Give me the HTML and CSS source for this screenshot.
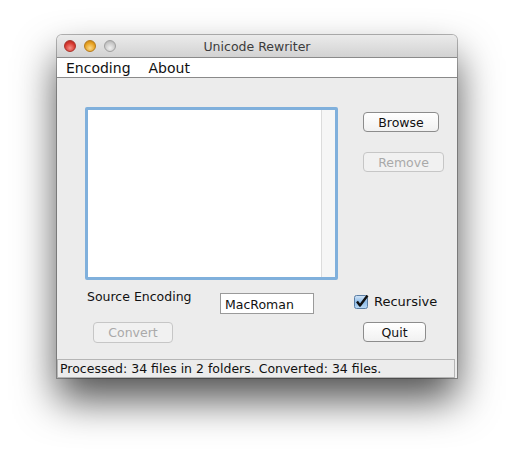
FILE: index.html
```html
<!DOCTYPE html>
<html lang="en">
<head>
  <meta charset="UTF-8">
  <title>Unicode Rewriter</title>
  <link rel="stylesheet" href="styles.css">
</head>
<body>
  <div class="window">
    <!-- title bar -->
    <div class="titlebar">
      <div class="lights">
        <span class="light red"></span>
        <span class="light yellow"></span>
        <span class="light grey"></span>
      </div>
      <div class="title">Unicode Rewriter</div>
    </div>

    <!-- menu -->
    <div class="menubar">
      <span class="menu-item">Encoding</span>
      <span class="menu-item">About</span>
    </div>

    <div class="content">
      <div class="top-row">
        <div class="file-list">
          <div class="list-area"></div>
          <div class="list-scroll"></div>
        </div>
        <div class="side-buttons">
          <button class="btn browse">Browse</button>
          <button class="btn remove" disabled>Remove</button>
        </div>
      </div>

      <div class="options-row">
        <label class="source-label">Source Encoding</label>
        <input class="encoding" type="text" value="MacRoman">
        <div class="check">
          <svg width="15" height="14" viewBox="0 0 15 14">
            <defs>
              <linearGradient id="cb" x1="0" y1="0" x2="0" y2="1">
                <stop offset="0" stop-color="#d4e6f7"/>
                <stop offset="0.5" stop-color="#8fbce8"/>
                <stop offset="1" stop-color="#b9d9f5"/>
              </linearGradient>
            </defs>
            <rect x="0.5" y="0.5" width="13" height="13" rx="2" fill="url(#cb)" stroke="#5a7da3"/>
            <path d="M3 6.5 L6 10.5 L13.5 0.5" fill="none" stroke="#111" stroke-width="2.4" stroke-linejoin="round"/>
          </svg>
          <span>Recursive</span>
        </div>
      </div>

      <div class="actions-row">
        <button class="btn convert" disabled>Convert</button>
        <button class="btn quit">Quit</button>
      </div>
    </div>

    <div class="statusbar">Processed: 34 files in 2 folders. Converted: 34 files.</div>
  </div>
</body>
</html>
```

FILE: styles.css
```css
* {
  margin: 0;
  padding: 0;
  box-sizing: border-box;
}
body {
  background-color: #ffffff;
  font-family: "DejaVu Sans", sans-serif;
  padding: 35px 0 0 57px;
  width: 514px;
  height: 458px;
  overflow: hidden;
}
.window {
  width: 400px;
  height: 343px;
  background-color: #ececec;
  border-radius: 5px 5px 0 0;
  box-shadow: 0 22px 40px rgba(0, 0, 0, 0.68), 0 0 0 1px rgba(0, 0, 0, 0.28);
  display: flex;
  flex-direction: column;
}
.titlebar {
  height: 22px;
  border-radius: 5px 5px 0 0;
  background: linear-gradient(#ebebeb, #d2d2d2);
  display: flex;
  align-items: center;
  position: relative;
}
.lights {
  display: flex;
  gap: 8px;
  padding-left: 7px;
}
.light {
  width: 12px;
  height: 12px;
  border-radius: 50%;
}
.red {
  background: radial-gradient(circle at 50% 70%, #f58f86, #d6362e 60%, #a3241d);
  border: 1px solid #a8322a;
}
.yellow {
  background: radial-gradient(circle at 50% 70%, #fbd98a, #e6a01f 60%, #b57712);
  border: 1px solid #b57a1c;
}
.grey {
  background: radial-gradient(circle at 50% 70%, #f0f0f0, #c8c8c8 60%, #a8a8a8);
  border: 1px solid #a0a0a0;
}
.title {
  position: absolute;
  left: 0;
  right: 0;
  text-align: center;
  font-size: 12.5px;
  color: #3c3c3c;
}
.menubar {
  height: 21px;
  background-color: #ffffff;
  border-top: 1px solid #8a8a8a;
  border-bottom: 1px solid #8a8a8a;
  display: flex;
  align-items: center;
  padding-left: 9px;
  gap: 18px;
  font-size: 14px;
  color: #111;
}
.content {
  flex: 1;
  padding-top: 29px;
}
.top-row {
  display: flex;
}
.file-list {
  margin-left: 28px;
  width: 253px;
  height: 173px;
  border: 3px solid #80b0dc;
  border-radius: 2px;
  background-color: #ffffff;
  display: flex;
}
.list-area {
  flex: 1;
}
.list-scroll {
  width: 14px;
  background-color: #f6f6f6;
  border-left: 1px solid #dcdcdc;
}
.side-buttons {
  margin-left: 25px;
  padding-top: 5px;
  display: flex;
  flex-direction: column;
  align-items: flex-start;
  gap: 20px;
}
.btn {
  height: 20px;
  font-family: "DejaVu Sans", sans-serif;
  font-size: 12.5px;
  color: #111;
  background: linear-gradient(#ffffff, #f1f1f1);
  border: 1px solid #8c8c8c;
  border-radius: 4px;
}
.btn:disabled {
  color: #a9a9a9;
  border-color: #c6c6c6;
  background: #f1f1f1;
}
.browse {
  width: 76px;
}
.remove {
  width: 81px;
}
.options-row {
  display: flex;
  align-items: flex-start;
  margin-top: 13px;
  font-size: 12.5px;
  color: #111;
}
.source-label {
  margin-left: 30px;
  margin-top: -4px;
  width: 133px;
  line-height: 16px;
}
.encoding {
  width: 94px;
  height: 21px;
  border: 1px solid #9a9a9a;
  background-color: #ffffff;
  font-family: "DejaVu Sans", sans-serif;
  font-size: 12.5px;
  padding: 2px 0 0 4px;
  color: #111;
}
.check {
  margin-left: 40px;
  padding-top: 1px;
  display: flex;
  align-items: center;
  gap: 5px;
  font-size: 13px;
}
.actions-row {
  display: flex;
  align-items: flex-start;
  margin-top: 8px;
}
.convert {
  margin-left: 36px;
  width: 80px;
  height: 21px;
}
.quit {
  margin-left: 190px;
  width: 63px;
}
.statusbar {
  height: 19px;
  margin-right: 2px;
  border: 1px solid #b5b5b5;
  font-size: 12.5px;
  line-height: 17px;
  padding-left: 2px;
  color: #111;
}
```
